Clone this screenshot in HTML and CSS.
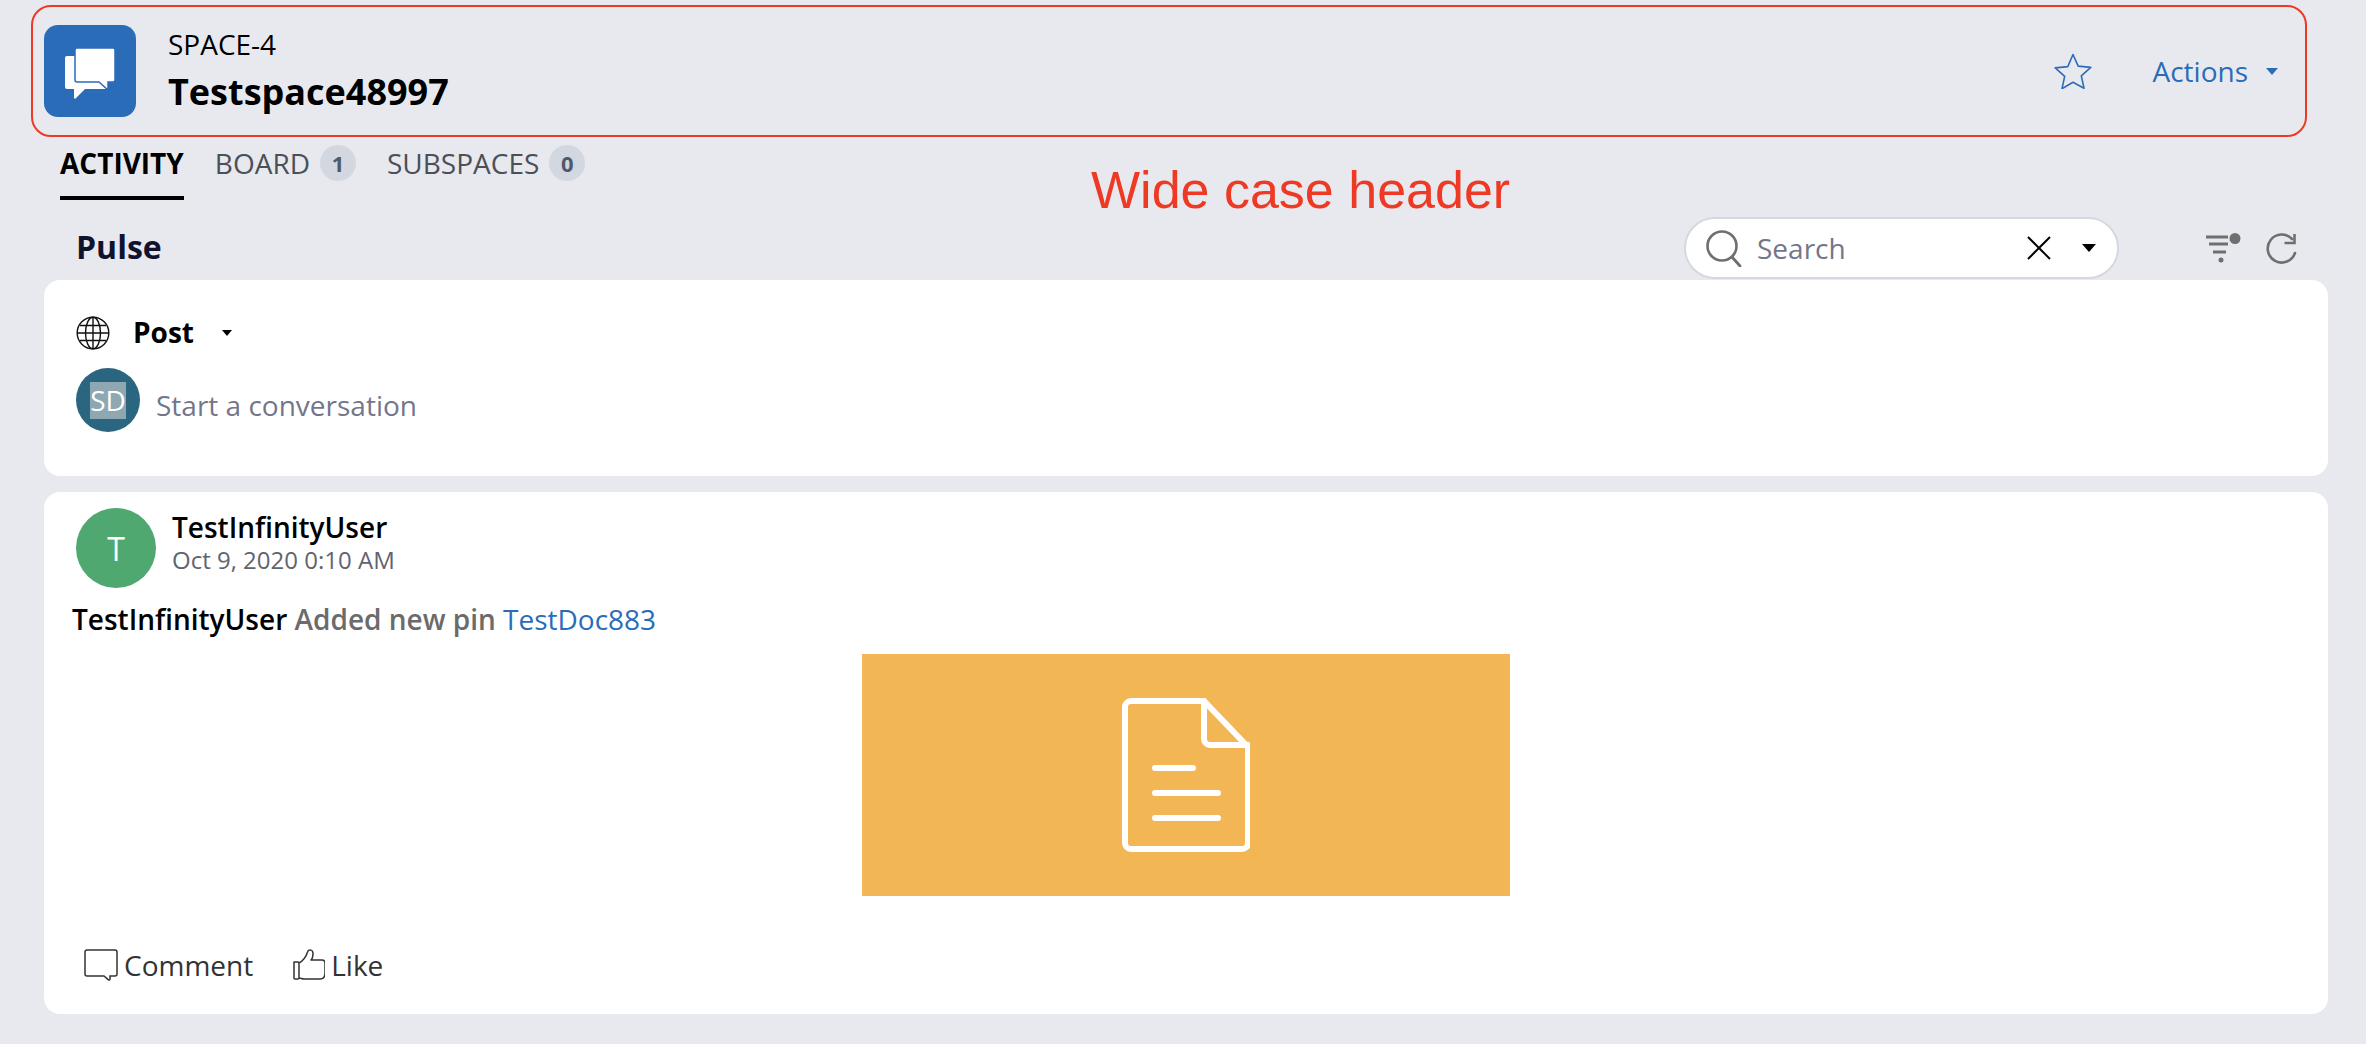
FILE: index.html
```html
<!DOCTYPE html>
<html lang="en">
<head>
    <meta charset="UTF-8">
    <title>Testspace48997</title>
    <link rel="stylesheet" href="styles.css">
</head>
<body>
    <header class="case-header">
        <div class="case-icon">
            <svg width="92" height="92" viewBox="0 0 92 92">
                <path d="M23 31h8v26h24l8 7H41l-9 9a1 1 0 0 1-2-1v-8h-7a2 2 0 0 1-2-2V33a2 2 0 0 1 2-2z" fill="#fff"/>
                <path d="M33 23h36a2 2 0 0 1 2 2v30a2 2 0 0 1-2 2h-5v8l-9-8H33a2 2 0 0 1-2-2V25a2 2 0 0 1 2-2z" fill="#fff" stroke="#2b6cb8" stroke-width="1.5"/>
            </svg>
        </div>
        <div class="case-title">
            <div class="case-id">SPACE-4</div>
            <div class="case-name">Testspace48997</div>
        </div>
        <svg class="star" width="38" height="36" viewBox="0 0 38 36">
            <path d="M19 1.500l5.200 11.600 12.600 1.300-9.500 8.400 2.700 12.400L19 29.300 8 35.700l2.700-12.400-9.500-8.400 12.600-1.300z" fill="none" stroke="#2b6cb8" stroke-width="1.600" stroke-linejoin="round"/>
        </svg>
        <div class="actions">Actions<span class="caret caret-blue"></span></div>
    </header>

    <nav class="tabs">
        <div class="tab tab-active">ACTIVITY</div>
        <div class="tab">BOARD<span class="badge">1</span></div>
        <div class="tab">SUBSPACES<span class="badge">0</span></div>
    </nav>

    <div class="annotation">Wide case header</div>

    <div class="pulse-head">
        <h2>Pulse</h2>
        <div class="search">
            <svg width="38" height="38" viewBox="0 0 38 38">
                <circle cx="17" cy="17" r="14.500" fill="none" stroke="#6f6f72" stroke-width="2.600"/>
                <path d="M27 28l8 9" stroke="#6f6f72" stroke-width="2.800" stroke-linecap="round"/>
            </svg>
            <span class="search-text">Search</span>
            <svg class="search-clear" width="26" height="26" viewBox="0 0 26 26">
                <path d="M2 2l22 22M24 2L2 24" stroke="#000" stroke-width="2"/>
            </svg>
            <span class="caret caret-black caret-search"></span>
        </div>
        <svg class="filter" width="36" height="30" viewBox="0 0 36 30">
            <path d="M0 4h22M3 11h19M7 19h13" stroke="#6f6f72" stroke-width="3" fill="none"/>
            <circle cx="29" cy="5.500" r="5.500" fill="#6f6f72"/>
            <circle cx="15" cy="27" r="2.500" fill="#6f6f72"/>
        </svg>
        <svg class="refresh" width="32" height="32" viewBox="0 0 32 32">
            <path d="M27 7A14 14 0 1 0 30 21" fill="none" stroke="#6f6f72" stroke-width="2.600" stroke-linecap="round"/>
            <path d="M29.500 2v9h-10" fill="none" stroke="#6f6f72" stroke-width="2.600"/>
        </svg>
    </div>

    <section class="card composer">
        <div class="post-row">
            <svg width="34" height="34" viewBox="0 0 34 34">
                <g fill="none" stroke="#111" stroke-width="1.400">
                    <circle cx="17" cy="17" r="15.800"/>
                    <ellipse cx="17" cy="17" rx="7.500" ry="15.800"/>
                    <path d="M17 1v32M1.200 17h31.600M4 9.500h26M4 24.500h26"/>
                </g>
            </svg>
            <span class="post-label">Post</span>
            <span class="caret caret-black caret-small"></span>
        </div>
        <div class="start-row">
            <div class="avatar avatar-sd"><span>SD</span></div>
            <span class="start-text">Start a conversation</span>
        </div>
    </section>

    <section class="card post">
        <div class="post-head">
            <div class="avatar avatar-t">T</div>
            <div class="post-meta">
                <div class="author">TestInfinityUser</div>
                <div class="post-date">Oct 9, 2020 0:10 AM</div>
            </div>
        </div>
        <p class="post-line"><span class="author-inline">TestInfinityUser</span> Added new pin <a class="doc-link">TestDoc883</a></p>
        <div class="doc-preview">
            <svg width="128" height="154" viewBox="-1 0 128 154">
                <g fill="none" stroke="#fff" stroke-width="6" stroke-linecap="round" stroke-linejoin="round">
                    <path d="M8 3h73l44 46v96a6 6 0 0 1-6 6H8a6 6 0 0 1-6-6V9a6 6 0 0 1 6-6z"/>
                    <path d="M81 3v38a6 6 0 0 0 6 6h38"/>
                    <path d="M32 70h38M32 95h63M32 120h63"/>
                </g>
            </svg>
        </div>
        <div class="post-actions">
            <span class="post-action">
                <svg width="34" height="32" viewBox="0 0 34 32">
                    <path d="M3 1h28a2 2 0 0 1 2 2v22a2 2 0 0 1-2 2h-5v3a1 1 0 0 1-1.600.8L20 27H3a2 2 0 0 1-2-2V3a2 2 0 0 1 2-2z" fill="none" stroke="#333" stroke-width="1.500"/>
                </svg>
                Comment
            </span>
            <span class="post-action">
                <svg width="32" height="32" viewBox="0 0 32 32">
                    <path d="M1 13h4a1 1 0 0 1 1 1v15a1 1 0 0 1-1 1H2a1 1 0 0 1-1-1zM6 14c4-2 7-6 9-12 1-2 5-1 5 2 0 3-1 6-2 7h11c2 0 3 1 3 3v10c0 4-2 6-5 6H11c-2 0-3-1-5-1" fill="none" stroke="#333" stroke-width="1.500" stroke-linejoin="round"/>
                </svg>
                Like
            </span>
        </div>
    </section>
</body>
</html>
```

FILE: styles.css
```css
body {
    margin: 0;
    height: 1044px;
    overflow: hidden;
    position: relative;
    background: #e8e9ef;
    font-family: "Open Sans", sans-serif;
    color: #000;
}
.case-header {
    display: flex;
    align-items: center;
    height: 132px;
    box-sizing: border-box;
    margin: 5px 59px 0 31px;
    padding: 0 27px 0 11px;
    border: 2px solid #ee3a24;
    border-radius: 20px;
}
.case-icon {
    width: 92px;
    height: 92px;
    border-radius: 14px;
    background: #2b6cb8;
}
.case-title {
    flex: 1;
    margin-left: 32px;
}
.case-id {
    font-size: 28px;
    line-height: 36px;
}
.case-name {
    margin-top: 5px;
    font-size: 36px;
    font-weight: 700;
    line-height: 50px;
}
.star {
    margin-right: 60px;
}
.actions {
    display: flex;
    align-items: center;
    gap: 18px;
    font-size: 28px;
    color: #2b6cb8;
}
.caret {
    width: 0;
    height: 0;
    border-left: 6px solid transparent;
    border-right: 6px solid transparent;
}
.caret-blue {
    border-top: 7px solid #2b6cb8;
}
.caret-black {
    border-top: 7px solid #000;
}
.tabs {
    display: flex;
    gap: 31px;
    height: 63px;
    padding-left: 60px;
    box-sizing: border-box;
}
.tab {
    display: flex;
    align-items: flex-start;
    gap: 10px;
    padding-top: 8px;
    font-size: 28px;
    line-height: 36px;
    color: #4a5058;
}
.tab-active {
    font-weight: 700;
    color: #000;
    border-bottom: 4px solid #000;
}
.badge {
    width: 36px;
    height: 36px;
    border-radius: 50%;
    background: #d2d7e0;
    font-size: 22px;
    font-weight: 700;
    line-height: 36px;
    text-align: center;
    color: #4e5a6b;
}
/* note added on top of the screenshot */
.annotation {
    position: absolute;
    left: 1091px;
    top: 158px;
    font-family: "Liberation Sans", sans-serif;
    font-size: 52px;
    line-height: 64px;
    color: #ee3a24;
}
.pulse-head {
    display: flex;
    align-items: center;
    height: 80px;
    box-sizing: border-box;
    margin-right: 69px;
    padding: 16px 0 0 76px;
}
.pulse-head h2 {
    flex: 1;
    margin: -3px 0 0;
    font-size: 32px;
    font-weight: 700;
    color: #10132e;
}
.search {
    display: flex;
    align-items: center;
    width: 435px;
    height: 62px;
    box-sizing: border-box;
    margin-right: 87px;
    padding: 0 21px 0 19px;
    background: #fff;
    border: 2px solid #d5d8e0;
    border-radius: 31px;
}
.search-text {
    flex: 1;
    margin-left: 14px;
    font-size: 28px;
    color: #73768a;
}
.search-clear {
    margin-right: 30px;
}
.caret-search {
    border-left-width: 7px;
    border-right-width: 7px;
    border-top-width: 8px;
}
.filter {
    margin-right: 23px;
}
.card {
    margin: 0 38px 16px 44px;
    background: #fff;
    border-radius: 16px;
    box-sizing: border-box;
}
.composer {
    height: 196px;
    padding: 36px 32px 0;
}
.post-row {
    display: flex;
    align-items: center;
    height: 34px;
}
.post-label {
    margin: -2px 28px 0 23px;
    font-size: 28px;
    font-weight: 700;
}
.caret-small {
    border-left-width: 5px;
    border-right-width: 5px;
    border-top-width: 6px;
}
.start-row {
    display: flex;
    align-items: center;
    gap: 16px;
    margin-top: 18px;
}
.avatar {
    display: flex;
    align-items: center;
    justify-content: center;
    border-radius: 50%;
    color: #fff;
}
.avatar-sd {
    width: 64px;
    height: 64px;
    background: #2b6680;
}
.avatar-sd span {
    background: #8fa7b1;
    font-size: 28px;
    line-height: 37px;
}
.start-text {
    padding-top: 10px;
    font-size: 28px;
    color: #73768a;
}
.post {
    height: 522px;
    padding: 16px 32px 0 28px;
}
.post-head {
    display: flex;
    align-items: center;
    gap: 16px;
    padding-left: 4px;
}
.post-meta {
    padding-bottom: 12px;
}
.avatar-t {
    width: 80px;
    height: 80px;
    background: #4fa86f;
    font-size: 32px;
}
.author {
    font-size: 28px;
    line-height: 36px;
    font-weight: 600;
}
.post-date {
    font-size: 24px;
    line-height: 30px;
    color: #5f6470;
}
.post-line {
    margin: 13px 0 0;
    font-size: 28px;
    line-height: 36px;
    font-weight: 600;
    color: #6b6b6b;
}
.author-inline {
    color: #000;
}
.doc-link {
    font-weight: 400;
    color: #2b6cb8;
}
.doc-preview {
    display: flex;
    align-items: center;
    justify-content: center;
    width: 648px;
    height: 242px;
    margin: 17px 0 0 790px;
    background: #f3b655;
}
.post-actions {
    display: flex;
    gap: 40px;
    margin-top: 50px;
    padding-left: 12px;
}
.post-action {
    display: flex;
    align-items: center;
    gap: 6px;
    font-size: 28px;
    color: #333;
}
```
